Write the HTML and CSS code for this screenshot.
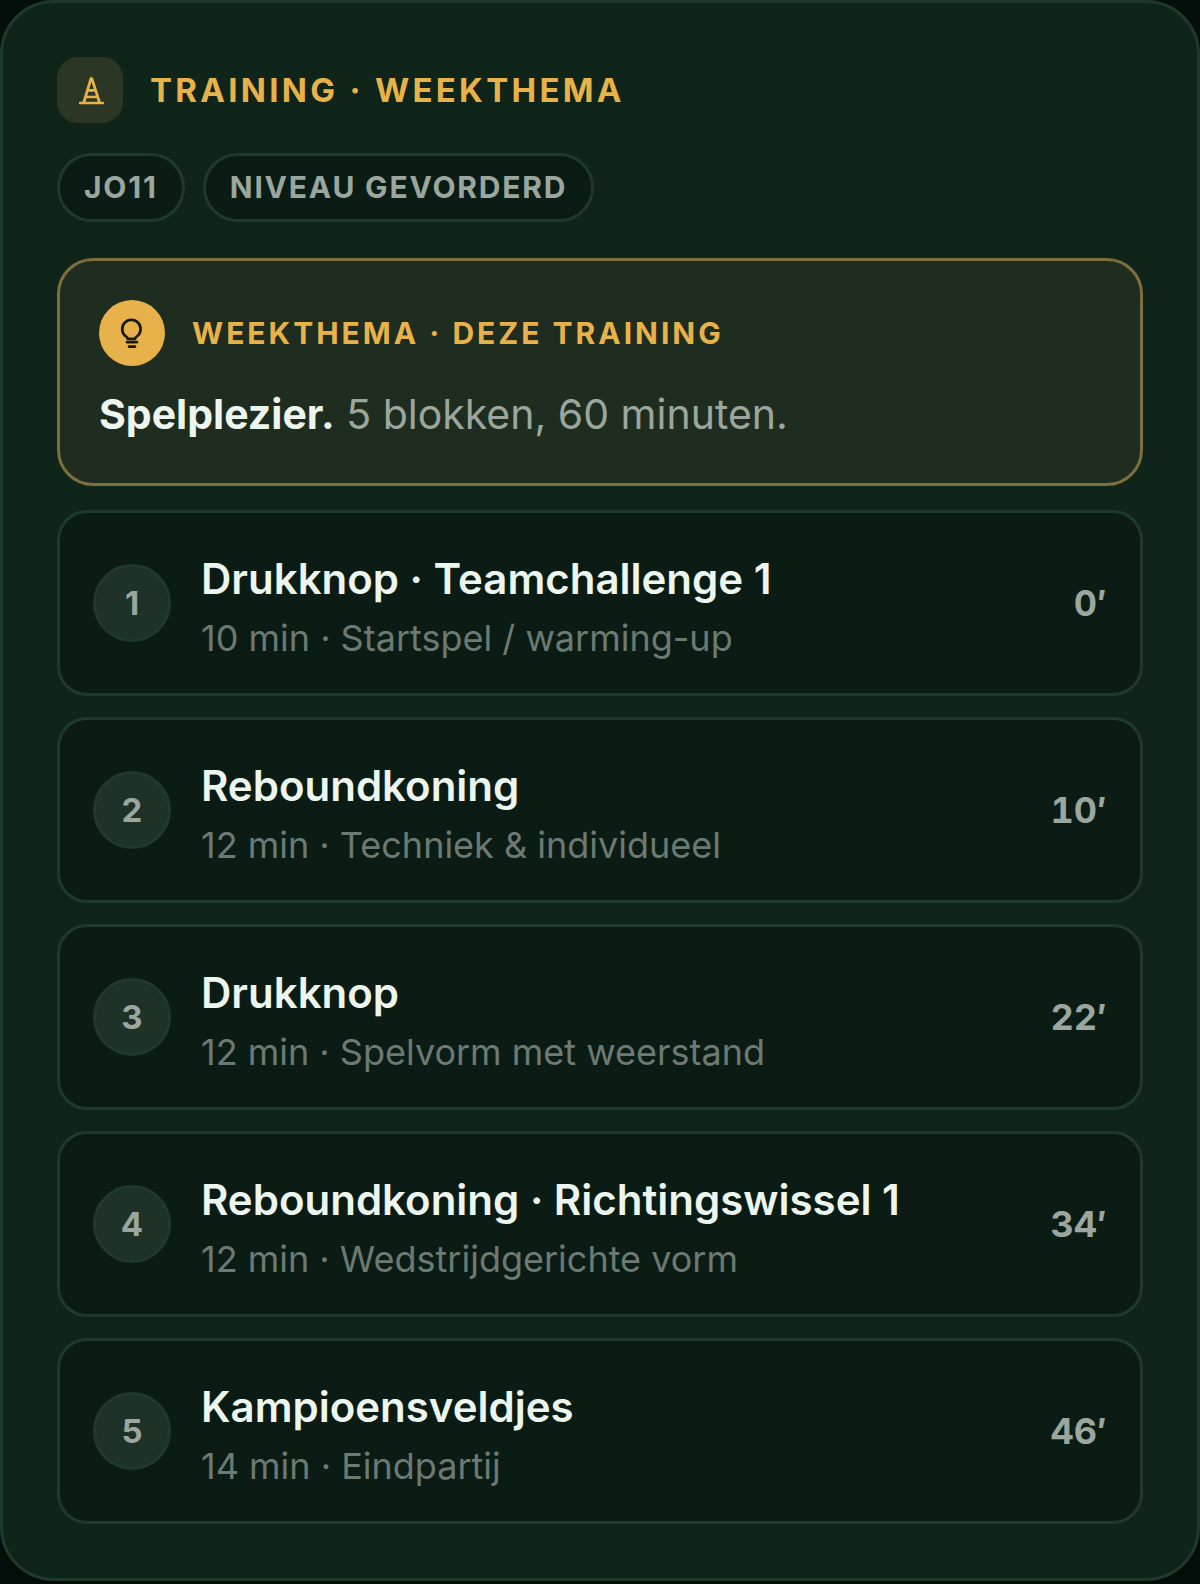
FILE: index.html
```
<!DOCTYPE html>
<html lang="nl">
<head>
    <meta charset="UTF-8">
    <meta name="viewport" content="width=device-width, initial-scale=1.0">
    <title>Training · Weekthema</title>
    <link rel="stylesheet" href="styles.css">
</head>
<body>

    <main class="card">
        <header class="card__header">
            <span class="card__icon">
                <svg viewBox="0 0 36 36" aria-hidden="true">
                    <path d="M8.200 31h22.600M11.800 30.500l7-23.500q.6-1.200 1.200 0l7.500 23.500M16 18.300h7.400M14 25h11.500" />
                </svg>
            </span>
            <h1 class="card__title">Training · Weekthema</h1>
        </header>

        <!-- Team en niveau -->
        <div class="chips">
            <span class="chip">JO11</span>
            <span class="chip">Niveau gevorderd</span>
        </div>

        <!-- Weekthema -->
        <section class="theme">
            <div class="theme__header">
                <span class="theme__icon">
                    <svg viewBox="0 0 36 36" aria-hidden="true">
                        <path d="M13.600 23.800c0-1.200-.8-1.800-2-2.600a9.200 9.200 0 1 1 11.600 0c-1.200.8-2 1.400-2 2.600z" />
                        <path d="M13 27.200h10M15 31.600h6" />
                    </svg>
                </span>
                <h2 class="theme__label">Weekthema · deze training</h2>
            </div>
            <p class="theme__text"><strong>Spelplezier.</strong> 5 blokken, 60 minuten.</p>
        </section>

        <!-- Blokken -->
        <ol class="blocks">
            <li class="block">
                <span class="block__number">1</span>
                <div class="block__body">
                    <h3 class="block__title">Drukknop · Teamchallenge 1</h3>
                    <p class="block__meta">10 min · Startspel / warming-up</p>
                </div>
                <span class="block__time">0′</span>
            </li>
            <li class="block">
                <span class="block__number">2</span>
                <div class="block__body">
                    <h3 class="block__title">Reboundkoning</h3>
                    <p class="block__meta">12 min · Techniek &amp; individueel</p>
                </div>
                <span class="block__time">10′</span>
            </li>
            <li class="block">
                <span class="block__number">3</span>
                <div class="block__body">
                    <h3 class="block__title">Drukknop</h3>
                    <p class="block__meta">12 min · Spelvorm met weerstand</p>
                </div>
                <span class="block__time">22′</span>
            </li>
            <li class="block">
                <span class="block__number">4</span>
                <div class="block__body">
                    <h3 class="block__title">Reboundkoning · Richtingswissel 1</h3>
                    <p class="block__meta">12 min · Wedstrijdgerichte vorm</p>
                </div>
                <span class="block__time">34′</span>
            </li>
            <li class="block">
                <span class="block__number">5</span>
                <div class="block__body">
                    <h3 class="block__title">Kampioensveldjes</h3>
                    <p class="block__meta">14 min · Eindpartij</p>
                </div>
                <span class="block__time">46′</span>
            </li>
        </ol>
    </main>

</body>
</html>
```

FILE: styles.css
```
:root {
    --bg: #040f0b;
    --card: #10251a;
    --inset: #0b1c14;
    --line: #1f3a2c;
    --text: #ecf5ee;
    --muted: #9aa69e;
    --dim: #6b7a72;
    --gold: #e8b24a;
}

* {
    box-sizing: border-box;
    margin: 0;
    padding: 0;
}

body {
    background: var(--bg);
    color: var(--text);
    font-family: "Inter", sans-serif;
    font-size: 42px;
}

.card {
    padding: 54px;
    background: var(--card);
    border: 3px solid var(--line);
    border-radius: 54px;
}

.card__header,
.theme__header {
    display: flex;
    align-items: center;
    gap: 27px;
}

.card__icon,
.theme__icon {
    display: flex;
    align-items: center;
    justify-content: center;
    flex: none;
    width: 66px;
    height: 66px;
}

.card__icon {
    background: #2b3625;
    border-radius: 21px;
    color: var(--gold);
}

.theme__icon {
    background: var(--gold);
    border-radius: 50%;
    color: #1c1a10;
}

.card__icon svg,
.theme__icon svg {
    width: 36px;
    height: 36px;
    fill: none;
    stroke: currentColor;
    stroke-width: 2.7;
    stroke-linecap: round;
    stroke-linejoin: round;
}

.card__title {
    color: var(--gold);
    font-size: 33px;
    font-weight: 700;
    letter-spacing: 0.1em;
    text-transform: uppercase;
}

.chips {
    display: flex;
    flex-wrap: wrap;
    gap: 18px;
    margin-top: 30px;
}

.chip {
    padding: 12px 24px;
    background: var(--inset);
    border: 3px solid var(--line);
    border-radius: 36px;
    color: var(--muted);
    font-size: 30px;
    font-weight: 700;
    letter-spacing: 0.06em;
    line-height: 39px;
    text-transform: uppercase;
}

.theme {
    margin-top: 36px;
    padding: 39px;
    background: #1f2d20;
    border: 3px solid #7d6e3e;
    border-radius: 36px;
}

.theme__label {
    color: var(--gold);
    font-size: 30px;
    font-weight: 700;
    letter-spacing: 0.1em;
    text-transform: uppercase;
}

.theme__text {
    margin-top: 18px;
    color: var(--muted);
    font-size: 41px;
    line-height: 60px;
}

.theme__text strong {
    color: var(--text);
    font-weight: 700;
}

.blocks {
    display: flex;
    flex-direction: column;
    gap: 21px;
    margin-top: 24px;
    list-style: none;
}

.block {
    display: flex;
    align-items: center;
    gap: 30px;
    padding: 34px 33px;
    background: var(--inset);
    border: 3px solid var(--line);
    border-radius: 30px;
}

.block__number {
    display: flex;
    align-items: center;
    justify-content: center;
    flex: none;
    width: 78px;
    height: 78px;
    background: #1e3228;
    border: 3px solid var(--line);
    border-radius: 50%;
    color: var(--muted);
    font-size: 33px;
    font-weight: 700;
}

.block__body {
    flex: 1;
}

.block__title {
    font-size: 42px;
    font-weight: 600;
    line-height: 64px;
}

.block__meta {
    margin-top: 6px;
    color: var(--dim);
    font-size: 36px;
    line-height: 42px;
}

.block__time {
    color: var(--muted);
    font-size: 36px;
    font-weight: 700;
    font-variant-numeric: tabular-nums;
    line-height: 42px;
}
```
